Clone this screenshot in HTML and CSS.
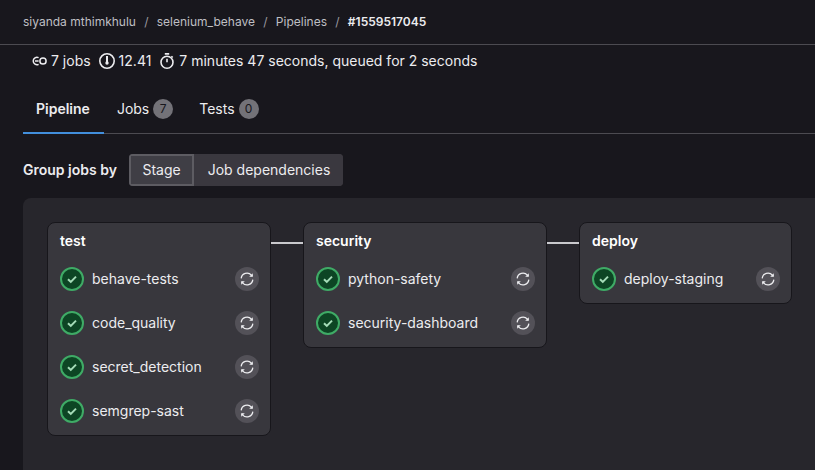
FILE: index.html
```html
<!DOCTYPE html>
<html lang="en">
<head>
<meta charset="utf-8">
<title>Pipeline #1559517045</title>
<link rel="stylesheet" href="styles.css">
</head>
<body>
<svg class="defs" width="0" height="0" aria-hidden="true">
  <symbol id="ok" viewBox="0 0 24 24">
    <circle cx="12" cy="12" r="11" fill="#0d4524" stroke="#3fab66" stroke-width="2"/>
    <path d="M8 12.2l2.8 2.7L16 9.6" fill="none" stroke="#a5dcb8" stroke-width="2"/>
  </symbol>
  <symbol id="retry" viewBox="0 0 24 24">
    <circle cx="12" cy="12" r="12" fill="#535158"/>
    <path d="M6.2 11.4A5.8 5.8 0 0 1 16.4 8.2L17.4 9.2M17.8 12.6A5.8 5.8 0 0 1 7.6 15.8L6.6 14.8" fill="none" stroke="#ececef" stroke-width="1.3"/>
    <path d="M17.8 6.2v3.6h-3.6zM6.2 17.8v-3.6h3.6z" fill="#ececef"/>
  </symbol>
</svg>
<nav class="crumbs">
  <a>siyanda mthimkhulu</a><span class="sep">/</span>
  <a>selenium_behave</a><span class="sep">/</span>
  <a>Pipelines</a><span class="sep">/</span>
  <strong>#1559517045</strong>
</nav>
<div class="stats">
  <span class="stat">
    <svg class="ico" viewBox="0 0 16 16" fill="none" stroke="#ececef" stroke-width="1.5"><path d="M7.6 4.7A3.7 3.7 0 1 0 7.6 11.3"/><path d="M4 8h3.6"/><circle cx="12" cy="8" r="3.1"/></svg>
    7 jobs
  </span>
  <span class="stat">
    <svg class="ico" viewBox="0 0 16 16" fill="none" stroke="#ececef" stroke-width="1.6"><circle cx="8" cy="8" r="7.2"/><path d="M8 3v6" stroke-width="2"/><circle cx="8" cy="10" r="1.7" fill="#ececef" stroke="none"/></svg>
    12.41
  </span>
  <span class="stat">
    <svg class="ico" viewBox="0 0 16 16" fill="none" stroke="#ececef" stroke-width="1.6"><circle cx="8" cy="9.2" r="6"/><path d="M8 9.2V5.8M5.8 .9h4.4M12.4 3.2l1.3 1.3"/></svg>
    7 minutes 47 seconds, queued for 2 seconds
  </span>
</div>
<div class="tabs">
  <a class="tab active">Pipeline</a>
  <a class="tab">Jobs<span class="count">7</span></a>
  <a class="tab">Tests<span class="count">0</span></a>
</div>
<div class="group">
  <span class="group-label">Group jobs by</span>
  <div class="seg">
    <button class="seg-btn selected">Stage</button>
    <button class="seg-btn">Job dependencies</button>
  </div>
</div>
<main class="graph">
  <section class="stage stage-test">
    <h3>test</h3>
    <div class="job"><svg class="st"><use href="#ok"/></svg><span class="name">behave-tests</span><svg class="st"><use href="#retry"/></svg></div>
    <div class="job"><svg class="st"><use href="#ok"/></svg><span class="name">code_quality</span><svg class="st"><use href="#retry"/></svg></div>
    <div class="job"><svg class="st"><use href="#ok"/></svg><span class="name">secret_detection</span><svg class="st"><use href="#retry"/></svg></div>
    <div class="job"><svg class="st"><use href="#ok"/></svg><span class="name">semgrep-sast</span><svg class="st"><use href="#retry"/></svg></div>
  </section>
  <div class="link"></div>
  <section class="stage stage-security">
    <h3>security</h3>
    <div class="job"><svg class="st"><use href="#ok"/></svg><span class="name">python-safety</span><svg class="st"><use href="#retry"/></svg></div>
    <div class="job"><svg class="st"><use href="#ok"/></svg><span class="name">security-dashboard</span><svg class="st"><use href="#retry"/></svg></div>
  </section>
  <div class="link"></div>
  <section class="stage stage-deploy">
    <h3>deploy</h3>
    <div class="job"><svg class="st"><use href="#ok"/></svg><span class="name">deploy-staging</span><svg class="st"><use href="#retry"/></svg></div>
  </section>
</main>
</body>
</html>
```
FILE: styles.css
```css
* { box-sizing: border-box; }
html, body { height: 100%; }
body {
  margin: 0;
  display: flex;
  flex-direction: column;
  overflow: hidden;
  background: #18171d;
  color: #ececef;
  font-family: Inter, "Noto Sans", sans-serif;
  font-size: 14px;
  line-height: 20px;
}
.defs { position: absolute; }
.crumbs {
  flex: none;
  height: 45px;
  margin: 0;
  padding: 13px 23px 0;
  border-bottom: 1px solid #4c4b51;
  display: flex;
  align-items: flex-start;
  font-size: 12px;
  line-height: 18px;
  color: #bfbfc3;
}
.crumbs strong { color: #ececef; font-weight: 600; }
.sep { margin: 0 8.25px; color: #9a99a0; }
.stats {
  flex: none;
  display: flex;
  gap: 8px;
  height: 20px;
  margin-top: 6px;
  padding-left: 31px;
}
.stat { display: flex; align-items: center; gap: 4px; white-space: nowrap; }
.ico { width: 16px; height: 16px; flex: none; }
.tabs {
  flex: none;
  display: flex;
  height: 63px;
  margin: 0 0 0 23px;
  padding-top: 24px;
  border-bottom: 1px solid #4c4b51;
}
.tab {
  display: flex;
  align-items: center;
  height: 38px;
  padding: 0 13px 11px;
  color: #ececef;
}
.tab.active {
  font-weight: 600;
  border-bottom: 2px solid #428fdc;
  height: 39px;
  padding: 0 14px 10px 13px;
}
.count {
  display: inline-flex;
  justify-content: center;
  align-items: center;
  width: 20px;
  height: 20px;
  margin-left: 4px;
  border-radius: 50%;
  background: #737278;
  color: #18171d;
  font-size: 12px;
}
.group {
  flex: none;
  display: flex;
  align-items: center;
  gap: 12px;
  margin: 20px 0 12px 23px;
}
.group-label { font-weight: 600; }
.seg { display: flex; height: 32px; border-radius: 4px; overflow: hidden; background: #3a383f; }
.seg-btn {
  border: 0;
  margin: 0;
  padding: 0 13px 0 13.5px;
  background: #3a383f;
  color: #ececef;
  font: inherit;
}
.seg-btn.selected { padding: 0 13.5px; box-shadow: inset 0 0 0 2px #5d5c62; background: #3f3e45; }
.graph {
  flex: 1;
  min-height: 0;
  display: flex;
  align-items: flex-start;
  margin-left: 23px;
  padding: 24px;
  background: #27262c;
  border-radius: 8px 0 0 0;
}
.stage {
  flex: none;
  padding: 9px 11px 12px 12px;
  background: #38373d;
  border: 1px solid #17161b;
  border-radius: 8px;
}
.stage-test { width: 224px; }
.stage-security { width: 244px; }
.stage-deploy { width: 213px; }
.stage h3 {
  margin: 0 0 17px;
  font-size: 14px;
  line-height: 18px;
  font-weight: 600;
  color: #fff;
}
.job { display: flex; align-items: center; height: 24px; }
.job + .job { margin-top: 20px; }
.st { width: 24px; height: 24px; flex: none; }
.name { flex: 1; margin-left: 8px; white-space: nowrap; }
.link { flex: none; width: 32px; height: 2px; margin-top: 20px; background: #c9c9cd; }
```
